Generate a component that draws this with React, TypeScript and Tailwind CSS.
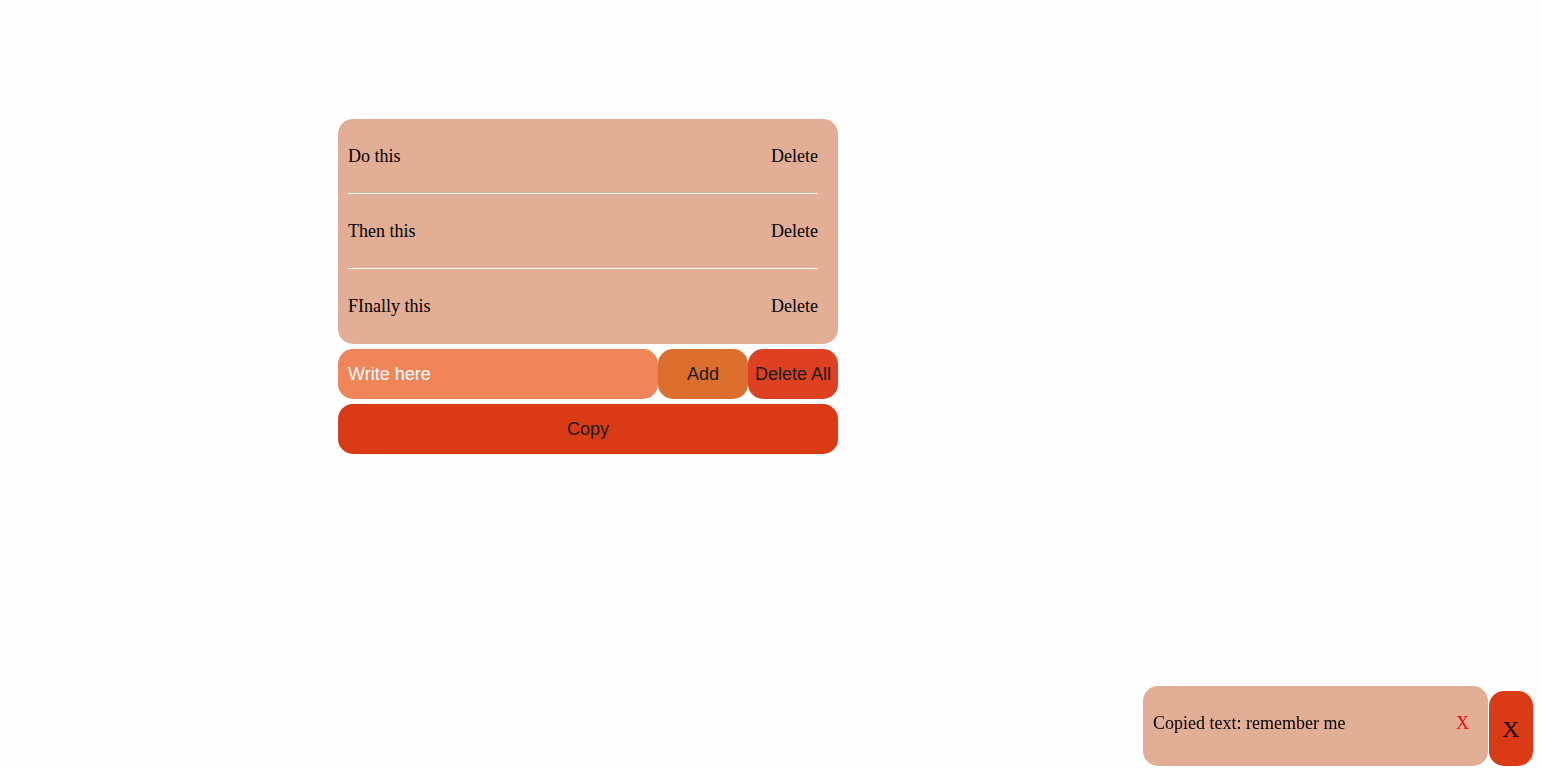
const items = ['Do this', 'Then this', 'FInally this'];

export default function App() {
  return (
    <div className="min-h-screen bg-[#fefefe] relative">
      <div className="pt-[119px] pl-[338px]">
        <div className="w-[500px] flex flex-col gap-[5px]">
          <ul className="bg-[#e3ae96] rounded-[15px] pl-[10px] pr-[20px] font-['Liberation_Serif',serif] text-[18px] text-black">
            {items.map((item, i) => (
              <li
                key={item}
                className={`h-[75px] flex items-center justify-between ${
                  i < items.length - 1 ? 'border-b border-white' : ''
                }`}
              >
                <span>{item}</span>
                <button className="cursor-pointer">Delete</button>
              </li>
            ))}
          </ul>

          <div className="flex h-[50px] font-['Liberation_Sans',Arial,sans-serif] text-[18px]">
            <input
              placeholder="Write here"
              className="w-[320px] h-full bg-[#f0855a] rounded-[15px] px-[10px] outline-none text-white placeholder:text-white"
            />
            <button className="w-[90px] h-full bg-[#dc6e2e] rounded-[15px] text-[#1a1a1a]">
              Add
            </button>
            <button className="w-[90px] h-full bg-[#dd4121] rounded-[15px] text-[#1a1a1a]">
              Delete All
            </button>
          </div>

          <button className="w-full h-[50px] bg-[#da3a14] rounded-[15px] font-['Liberation_Sans',Arial,sans-serif] text-[18px] text-[#1a1a1a]">
            Copy
          </button>
        </div>
      </div>

      <div className="fixed right-[9px] bottom-[3px] flex items-end font-['Liberation_Serif',serif]">
        <div className="w-[345px] h-[80px] bg-[#e3ae96] rounded-[15px] flex items-center justify-between pl-[10px] pr-[19px] pb-[6px] text-[18px]">
          <span className="text-black">Copied text: remember me</span>
          <button className="text-[#ff0000]">X</button>
        </div>
        <button className="w-[44px] h-[75px] bg-[#da3a14] rounded-[15px] text-[24px] text-black ml-px">
          X
        </button>
      </div>
    </div>
  );
}
